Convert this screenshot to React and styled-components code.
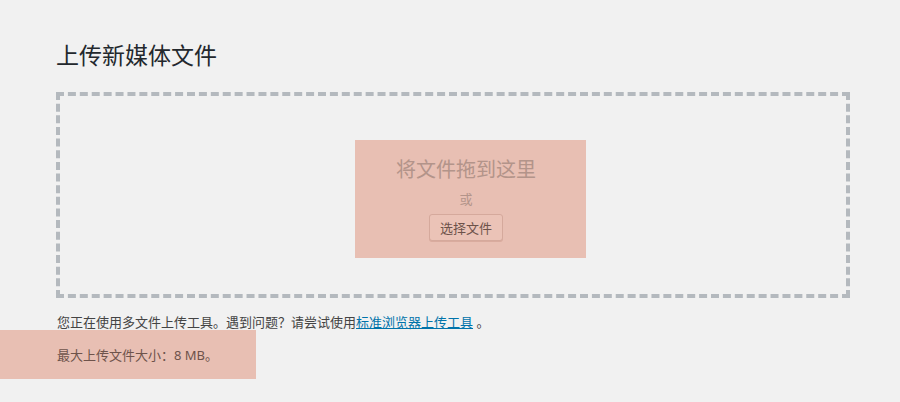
import styled, { createGlobalStyle } from "styled-components";

const GlobalStyle = createGlobalStyle`
  html, body {
    margin: 0;
    padding: 0;
    background: #f1f1f1;
  }
  body {
    font-family: "Noto Sans", "Noto Sans CJK SC", sans-serif;
    color: #444;
    font-size: 13px;
  }
`;

const Page = styled.div`
  width: 900px;
  height: 402px;
  overflow: hidden;
`;

const Title = styled.h1`
  margin: 0 0 0 56px;
  padding-top: 41px;
  font-size: 23px;
  font-weight: 400;
  line-height: 29px;
  color: #23282d;
`;

const DropArea = styled.div`
  box-sizing: border-box;
  margin: 22px 0 0 56px;
  width: 794px;
  height: 206px;
  border: 4px dashed #b4b9be;
  padding: 44px 0 0 295px;
`;

const Highlight = styled.div`
  box-sizing: border-box;
  width: 231px;
  height: 118px;
  padding: 16px 9px 0 0;
  background: #e8bfb3;
  text-align: center;
`;

const DropTitle = styled.p`
  margin: 0;
  font-size: 20px;
  line-height: 28px;
  color: #b3948a;
`;

const Or = styled.p`
  margin: 0;
  font-size: 13px;
  line-height: 30px;
  color: #b3948a;
`;

const SelectButton = styled.button`
  box-sizing: border-box;
  height: 27px;
  padding: 0 10px;
  font-family: inherit;
  font-size: 13px;
  line-height: 24px;
  color: #6d524a;
  background: #ebc3b7;
  border: 1px solid #d5a99c;
  border-radius: 3px;
  box-shadow: 0 1px 0 #d9ab9e;
  cursor: pointer;
`;

const Note = styled.p`
  margin: 17px 0 0 57px;
  line-height: 14px;
  height: 15px;
  color: #444;
`;

const Link = styled.a`
  color: #0073aa;
  text-decoration: underline;
`;

const Band = styled.div`
  box-sizing: border-box;
  width: 256px;
  height: 49px;
  padding-left: 57px;
  line-height: 50px;
  background: #e8bfb3;
  color: #6e534b;
`;

export default function App() {
  return (
    <Page>
      <GlobalStyle />
      <Title>上传新媒体文件</Title>
      <DropArea>
        <Highlight>
          <DropTitle>将文件拖到这里</DropTitle>
          <Or>或</Or>
          <SelectButton>选择文件</SelectButton>
        </Highlight>
      </DropArea>
      <Note>
        您正在使用多文件上传工具。遇到问题？请尝试使用<Link href="#">标准浏览器上传工具</Link> 。
      </Note>
      <Band>最大上传文件大小：8 MB。</Band>
    </Page>
  );
}
